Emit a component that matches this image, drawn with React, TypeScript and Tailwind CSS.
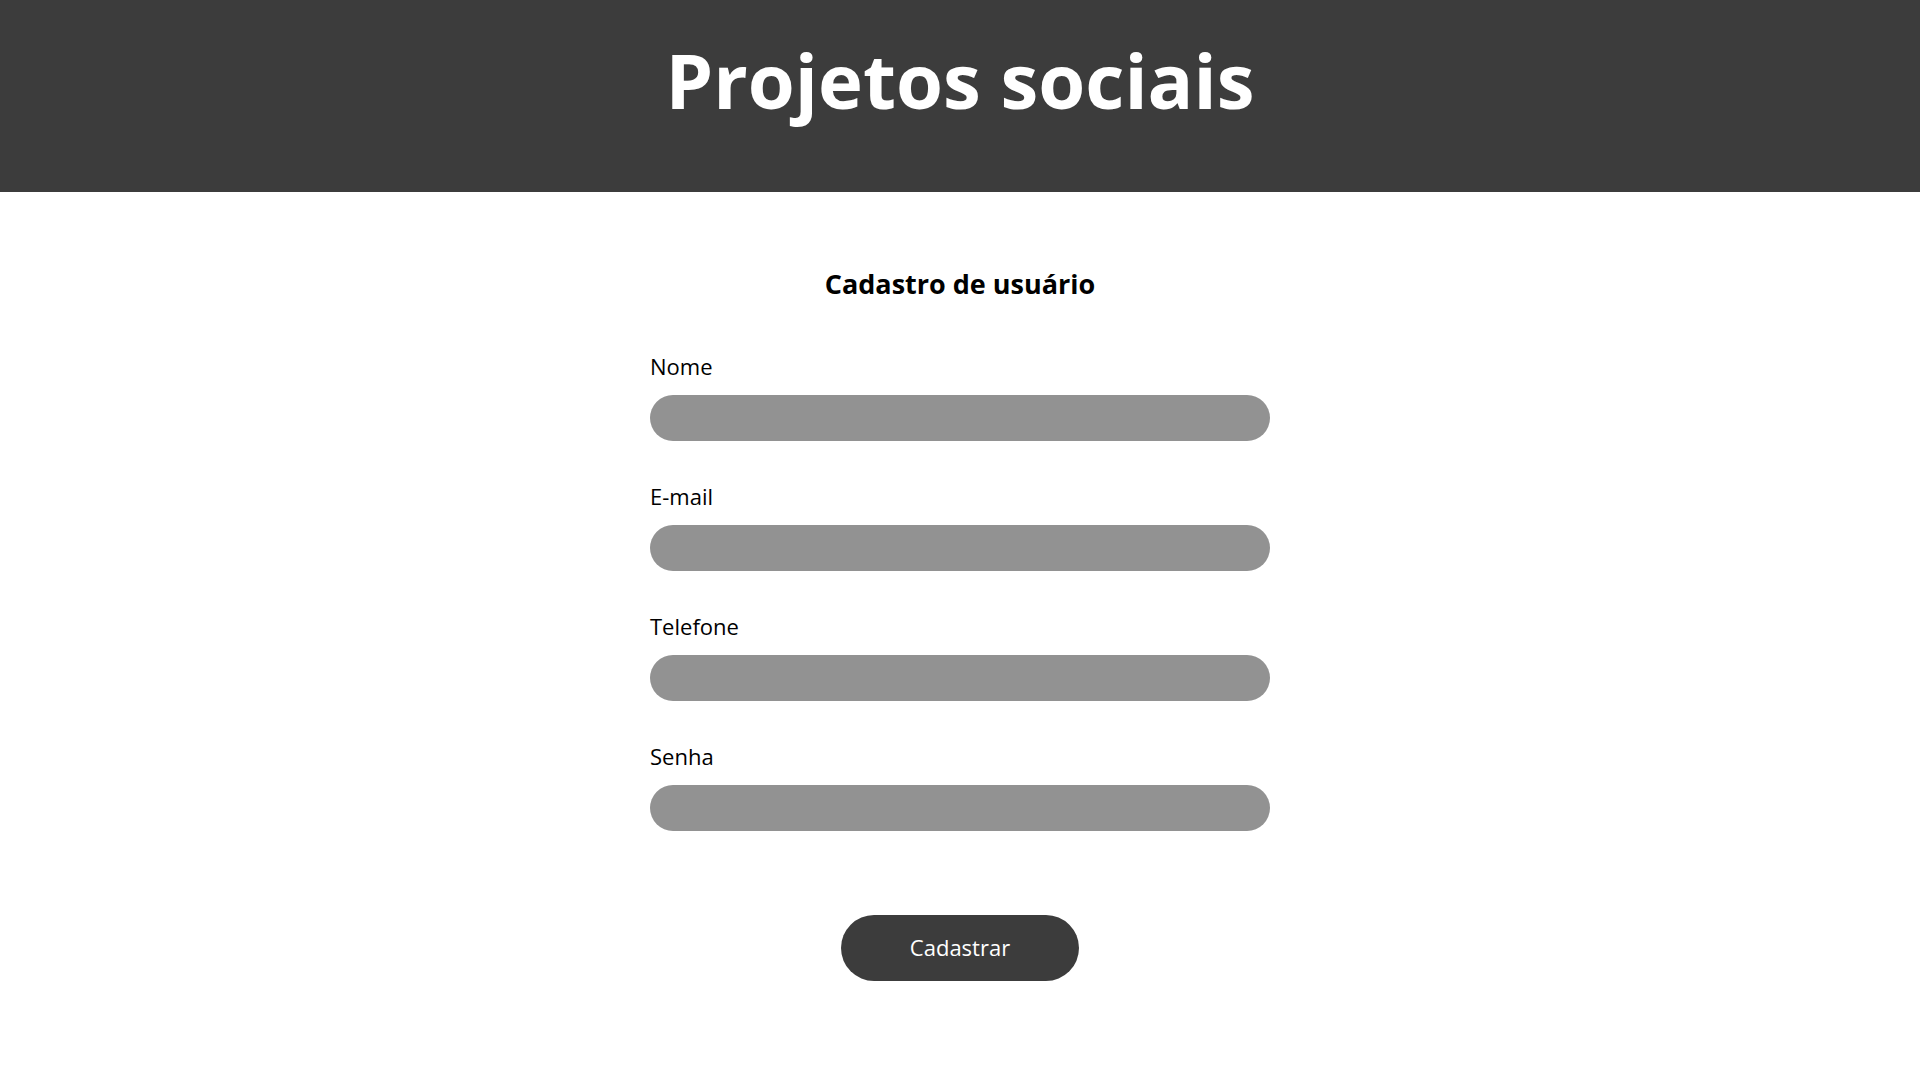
const fields = ["Nome", "E-mail", "Telefone", "Senha"];

export default function App() {
  return (
    <div className="min-h-screen bg-white font-['Open_Sans',sans-serif] text-black">
      <header className="flex h-[192px] justify-center bg-[#3c3c3c] pt-[23px]">
        <h1 className="text-[76px] font-bold leading-normal text-white">Projetos sociais</h1>
      </header>

      <main className="mx-auto flex w-[620px] flex-col pt-[72px]">
        <h2 className="text-center text-[27px] font-bold leading-normal">Cadastro de usuário</h2>

        <form className="mt-[45px] flex flex-col gap-[39px]">
          {fields.map((label) => (
            <label key={label} className="flex flex-col gap-[12px]">
              <span className="text-[22px] leading-normal">{label}</span>
              <input
                type={label === "Senha" ? "password" : "text"}
                className="h-[46px] w-full rounded-full bg-[#929292] px-5 outline-none"
              />
            </label>
          ))}

          <button
            type="button"
            className="mx-auto mt-[45px] h-[66px] w-[238px] rounded-full bg-[#3c3c3c] text-[22px] text-white"
          >
            Cadastrar
          </button>
        </form>
      </main>
    </div>
  );
}
